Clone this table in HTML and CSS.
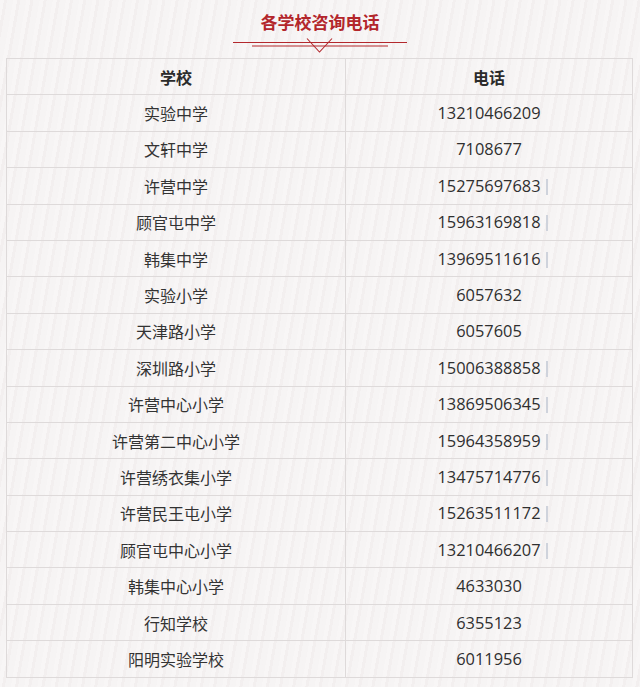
FILE: index.html
```html
<!DOCTYPE html>
<html lang="zh-CN">
<head>
<meta charset="utf-8">
<title>各学校咨询电话</title>
<link rel="stylesheet" href="styles.css">
</head>
<body>
<div class="page">
  <header class="heading">
    <h1 class="title">各学校咨询电话</h1>
    <svg class="ornament" width="174" height="15" viewBox="0 0 174 15" aria-hidden="true">
      <line x1="0" y1="4.5" x2="174" y2="4.5" stroke="#b3282d" stroke-width="1.2"/>
      <line x1="19" y1="8" x2="155" y2="8" stroke="#b3282d" stroke-width="1.2"/>
      <polyline points="74,0.5 86.5,14 99,0.5" fill="none" stroke="#b3282d" stroke-width="1.1"/>
    </svg>
  </header>
  <table class="phones">
    <thead>
      <tr><th>学校</th><th>电话</th></tr>
    </thead>
    <tbody>
      <tr><td>实验中学</td><td class="num">13210466209</td></tr>
      <tr><td>文轩中学</td><td class="num">7108677</td></tr>
      <tr><td>许营中学</td><td class="num">15275697683<span class="caret"></span></td></tr>
      <tr><td>顾官屯中学</td><td class="num">15963169818<span class="caret"></span></td></tr>
      <tr><td>韩集中学</td><td class="num">13969511616<span class="caret"></span></td></tr>
      <tr><td>实验小学</td><td class="num">6057632</td></tr>
      <tr><td>天津路小学</td><td class="num">6057605</td></tr>
      <tr><td>深圳路小学</td><td class="num">15006388858<span class="caret"></span></td></tr>
      <tr><td>许营中心小学</td><td class="num">13869506345<span class="caret"></span></td></tr>
      <tr><td>许营第二中心小学</td><td class="num">15964358959<span class="caret"></span></td></tr>
      <tr><td>许营绣衣集小学</td><td class="num">13475714776<span class="caret"></span></td></tr>
      <tr><td>许营民王屯小学</td><td class="num">15263511172<span class="caret"></span></td></tr>
      <tr><td>顾官屯中心小学</td><td class="num">13210466207<span class="caret"></span></td></tr>
      <tr><td>韩集中心小学</td><td class="num">4633030</td></tr>
      <tr><td>行知学校</td><td class="num">6355123</td></tr>
      <tr><td>阳明实验学校</td><td class="num">6011956</td></tr>
    </tbody>
  </table>
</div>
</body>
</html>
```
FILE: styles.css
```css
html, body {
  margin: 0;
  padding: 0;
}
body {
  background: #f5f2f2;
  font-family: "Noto Sans CJK SC", "Noto Sans", sans-serif;
  color: #333333;
}
.page {
  width: 640px;
  height: 687px;
  overflow: hidden;
  background:
    repeating-linear-gradient(100deg, rgba(255,255,255,0.3) 0 4px, rgba(232,226,226,0.18) 4px 7px, rgba(255,255,255,0.15) 7px 13px);
}
.heading {
  height: 58px;
  display: flex;
  flex-direction: column;
  align-items: center;
}
.title {
  margin: 12px 0 0 0;
  font-size: 17px;
  line-height: 20px;
  font-weight: bold;
  color: #b3262b;
}
.ornament {
  display: block;
  margin-top: 6px;
}
.phones {
  margin-left: 6px;
  width: 627px;
  border-collapse: collapse;
  table-layout: fixed;
  font-size: 16px;
}
.phones th,
.phones td {
  border: 1px solid #dedada;
  text-align: center;
  vertical-align: middle;
  padding: 0;
  height: 35.4px;
  line-height: 20px;
}
.phones th {
  font-weight: bold;
  color: #2b2b2b;
}
.phones th:first-child,
.phones td:first-child {
  width: 338px;
}
.phones td.num {
  font-family: "Open Sans", "Noto Sans CJK SC", sans-serif;
  font-size: 16.4px;
  color: #2f2f2f;
}
.caret {
  display: inline-block;
  width: 2px;
  height: 16px;
  margin-left: 5px;
  margin-right: -7px;
  background: #cfd3dc;
  vertical-align: -3px;
}
```
